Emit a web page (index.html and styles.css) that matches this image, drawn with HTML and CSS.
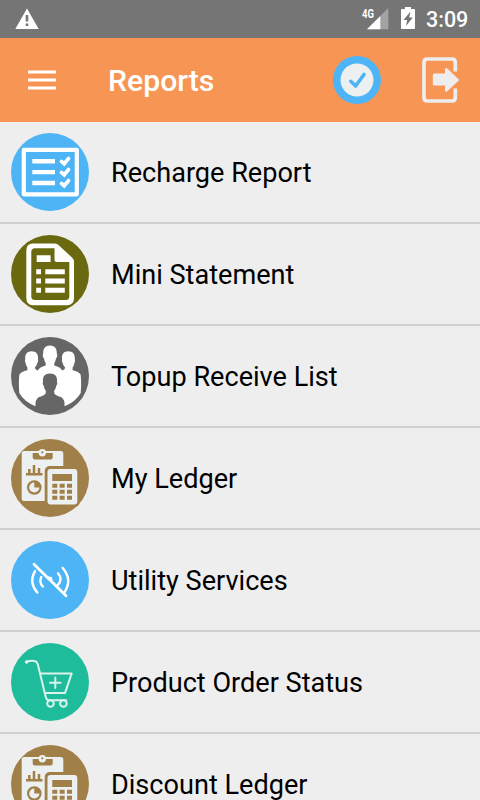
FILE: index.html
```
<!DOCTYPE html>
<html lang="en">
<head>
<meta charset="utf-8">
<title>Reports</title>
<link rel="stylesheet" href="styles.css">
</head>
<body>
<svg class="defs" width="0" height="0" aria-hidden="true">
  <symbol id="ledger" viewBox="0 0 78 78">
    <circle cx="39" cy="39" r="39" fill="#a17f48"/>
    <rect x="10.7" y="12" width="41.6" height="50" rx="2.5" fill="#ecf0f1"/>
    <path d="M21.7 14H41.7V18.3Q41.7 20.5 39.5 20.5H24Q21.7 20.5 21.7 18.3Z" fill="#a17f48"/>
    <circle cx="31.3" cy="13.7" r="3.7" fill="#ecf0f1"/><circle cx="31.3" cy="13.3" r="1.1" fill="#a17f48"/>
    <path d="M15 35.2H31.5M18.3 35V30M23 35V26M28 35V29" stroke="#a17f48" stroke-width="2.5" fill="none"/>
    <circle cx="23.3" cy="48.5" r="6.2" fill="none" stroke="#a17f48" stroke-width="2.2"/>
    <path d="M23.3 48.5V42.3A6.2 6.2 0 0 1 29.5 48.5Z" fill="#a17f48"/>
    <rect x="33.7" y="27" width="35" height="41" rx="5" fill="#a17f48"/>
    <rect x="36.5" y="30" width="29.8" height="35.5" rx="3" fill="#ecf0f1"/>
    <path d="M41.3 35H61V42H41.3Z" fill="#a17f48"/>
    <path d="M41.3 46.7H61M41.3 52.7H61M41.3 58.7H61" stroke="#a17f48" stroke-width="4" stroke-dasharray="5 2.35"/>
  </symbol>
</svg>

<div class="status">
  <svg class="warn" width="24" height="22" viewBox="0 0 24 22"><path d="M12 .5 23.7 21H.3Z" fill="#fff"/><path d="M12 7V13.5M12 15.5V18" stroke="#757575" stroke-width="2.6"/></svg>
  <svg class="signal" width="30" height="30" viewBox="-2 -8 30 30"><path d="M26.3 0V21.3H5Z" fill="#a3a3a3"/><path d="M18.3 8V21.3H5Z" fill="#fff"/><path d="M0 0H14V11H0Z" fill="#757575"/><text x="0" y="9.6" class="net" textLength="12" lengthAdjust="spacingAndGlyphs">4G</text></svg>
  <svg class="battery" width="14" height="22" viewBox="0 0 14 22"><path d="M4 0H10V2H13Q14 2 14 3V21Q14 22 13 22H1Q0 22 0 21V3Q0 2 1 2H4Z" fill="#fff"/><path d="M9.5 4.5 2.5 13H6.2L5 19 11.8 10.5H8.2Z" fill="#757575"/></svg>
  <span class="clock">3:09</span>
</div>

<header class="bar">
  <svg class="menu" width="28" height="20" viewBox="0 0 28 20"><path d="M0 2H28M0 10H28M0 18H28" stroke="#fff" stroke-width="2.8"/></svg>
  <h1 class="title">Reports</h1>
  <svg class="verify" width="48" height="48" viewBox="0 0 48 48"><circle cx="24" cy="24" r="24" fill="#4db4f5"/><circle cx="24" cy="24" r="16.5" fill="#ecf0f1"/><path d="M17.8 25.3 22.6 30 31 18.5" fill="none" stroke="#4db4f5" stroke-width="3.6" stroke-linecap="round" stroke-linejoin="round"/></svg>
  <svg class="exit" width="38" height="46" viewBox="0 0 38 46"><path d="M33.3 14.5V5.5Q33.3 2 30 2H5.5Q2 2 2 5.5V40.5Q2 44 5.5 44H30Q33.3 44 33.3 40.5V31.5" fill="none" stroke="#ededed" stroke-width="3.7"/><path d="M12.5 16.5H23V11.5Q23.5 10.5 25 11.2L37.3 23 25 34.5Q23.5 35 23 34V28.5H12.5Q10.8 28.5 10.8 27V18Q10.8 16.5 12.5 16.5Z" fill="#ededed" stroke="#f79654" stroke-width="2.4" paint-order="stroke"/></svg>
</header>

<main class="list">
  <div class="row">
    <svg class="icon" viewBox="0 0 78 78"><circle cx="39" cy="39" r="39" fill="#4db4f5"/><rect x="12.8" y="16.8" width="53" height="44.5" fill="none" stroke="#fff" stroke-width="4.2" stroke-linejoin="round"/><path d="M21.3 28.3H44M21.3 39.1H44M21.3 50H44" stroke="#fff" stroke-width="4.4"/><path d="M50.5 28.4 53.2 30.8 57.5 25.6M50.5 39.4 53.2 41.8 57.5 36.6M50.5 50.4 53.2 52.8 57.5 47.6" fill="none" stroke="#fff" stroke-width="3.8" stroke-linecap="round"/></svg>
    <span class="label">Recharge Report</span>
  </div>
  <div class="row">
    <svg class="icon" viewBox="0 0 78 78"><circle cx="39" cy="39" r="39" fill="#6b690f"/><path d="M22 8.5H44Q46 8.5 47.5 10L61 22.5Q63 24.5 63 27V63Q63 70.2 56 70.2H22Q15.3 70.2 15.3 63V15.5Q15.3 8.5 22 8.5Z" fill="#fff"/><path d="M24 13.3H43.5V24.5Q43.5 27 46 27H58.3V61.5Q58.3 65 54.8 65H24Q20.3 65 20.3 61.5V17Q20.3 13.3 24 13.3Z" fill="#6b690f"/><path d="M25.7 20.3H39.6V27H25.7ZM25.2 34.2H30V39.2H25.2ZM34.3 34.2H53.8V39.2H34.3ZM25.2 43.6H30V48.6H25.2ZM34.3 43.6H53.8V48.6H34.3ZM25.2 52.8H30V57.8H25.2ZM34.3 52.8H53.8V57.8H34.3Z" fill="#fff"/></svg>
    <span class="label">Mini Statement</span>
  </div>
  <div class="row">
    <svg class="icon" viewBox="0 0 78 78"><circle cx="39" cy="39" r="39" fill="#666"/><path d="M39 8.6C43.5 8.6 46 11.5 45.8 16.5C46.8 18 46 20.5 45 21.5Q44.5 25 43.3 26.2V28.5Q49.5 30 51.3 33.5Q54.2 32.5 54.2 30.5Q52.5 29 51.8 26.5Q50.3 24 51 22C50.5 17 53 14.3 57.3 14.3S64.2 17 63.8 22Q64.7 24 63.3 26.5Q62.8 29 61.6 30.5V33.2Q68 34.5 69.6 37.5Q70.6 45 69.7 56Q65 64.5 53.6 69.2H24.4Q13 64.5 8.3 56Q7.4 45 8.4 37.5Q10 34.5 16.4 33.2V30.5Q15.2 29 14.7 26.5Q13.3 24 14.2 22C13.8 17 16.4 14.3 20.7 14.3S27.5 17 27 22Q27.7 24 26.2 26.5Q25.5 29 23.8 30.5Q23.8 32.5 26.7 33.5Q28.5 30 34.7 28.5V26.2Q33.5 25 33 21.5C32 20.5 31.2 18 32.2 16.5C32 11.5 34.5 8.6 39 8.6Z" fill="#fff"/><path d="M24.4 70Q24 62 28 60Q34 58.5 34.8 56V53.5Q33.2 52 32.8 49Q31 47 32 44.5C31.5 39.5 34 36.6 39 36.6S46.5 39.5 46 44.5Q47 47 45.2 49Q44.8 52 43.2 53.5V56Q44 58.5 50 60Q54 62 53.6 70Q39 78 24.4 70Z" fill="#666"/></svg>
    <span class="label">Topup Receive List</span>
  </div>
  <div class="row">
    <svg class="icon"><use href="#ledger"/></svg>
    <span class="label">My Ledger</span>
  </div>
  <div class="row">
    <svg class="icon" viewBox="0 0 78 78"><circle cx="39" cy="39" r="39" fill="#4db4f5"/><g fill="none" stroke="#fff" stroke-width="2.4" stroke-linecap="round"><path d="M23 23.3 55 54.7" stroke-width="2.8"/><path d="M24 30Q17.5 41.5 26.3 51.5M30.3 36Q27.8 41 31.8 45.5M47 32.3Q52.3 38.5 46.8 43.8M51.7 27Q61.5 38.5 53.8 50.8"/></g><path d="M35 36.3Q38 34.7 41 36.3L42 42Z" fill="#fff"/></svg>
    <span class="label">Utility Services</span>
  </div>
  <div class="row">
    <svg class="icon" viewBox="0 0 78 78"><circle cx="39" cy="39" r="39" fill="#1fbc9c"/><g fill="none" stroke="#d9f3ed" stroke-width="2" stroke-linecap="round" stroke-linejoin="round"><path d="M15.5 18.8Q18 17.7 23 17.9Q26 18 27 22L34.5 53Q35.3 57.3 38 57.3H55.3"/><path d="M29.5 30.4H60.7L54 50.1H34M44.3 34.5V45M39 39.7H49.6"/><circle cx="39.5" cy="60.5" r="3.3"/><circle cx="52.4" cy="60.5" r="3.3"/></g><circle cx="15.6" cy="19" r="1.8" fill="#ecf0f1"/></svg>
    <span class="label">Product Order Status</span>
  </div>
  <div class="row">
    <svg class="icon"><use href="#ledger"/></svg>
    <span class="label">Discount Ledger</span>
  </div>
</main>
</body>
</html>
```
FILE: styles.css
```
* { box-sizing: border-box; }

body {
  margin: 0;
  width: 480px;
  height: 800px;
  overflow: hidden;
  display: flex;
  flex-direction: column;
  background: #eee;
  font-family: Roboto, sans-serif;
  color: #000;
}

svg { display: block; flex: none; }

.defs { width: 0; height: 0; }

.status {
  flex: none;
  display: flex;
  align-items: flex-start;
  height: 38px;
  padding: 8px 0 0 15px;
  background: #757575;
  color: #fff;
}

.signal { margin: -8px 0 0 321px; }
.battery { margin: -1px 0 0 11px; }

.net {
  font-size: 12.5px;
  font-weight: 700;
  fill: #fff;
}

.clock {
  margin: -1px 0 0 11px;
  font-size: 21.5px;
  font-weight: 500;
  line-height: 26px;
}

.bar {
  flex: none;
  display: flex;
  align-items: center;
  height: 84px;
  padding-left: 28px;
  background: #f79654;
}

.title {
  width: 225px;
  margin: 2px 0 0 52px;
  font-size: 30.2px;
  font-weight: 500;
  line-height: 36px;
  color: #fff;
}

.exit { margin-left: 41px; }

.list { flex: none; }

.row {
  display: flex;
  align-items: center;
  height: 102px;
  padding-left: 11px;
  border-bottom: 2px solid #cfcfcf;
}

.icon {
  width: 78px;
  height: 78px;
}

.label {
  margin: 2px 0 0 22px;
  font-size: 27.1px;
  line-height: 32px;
  white-space: nowrap;
}
```
